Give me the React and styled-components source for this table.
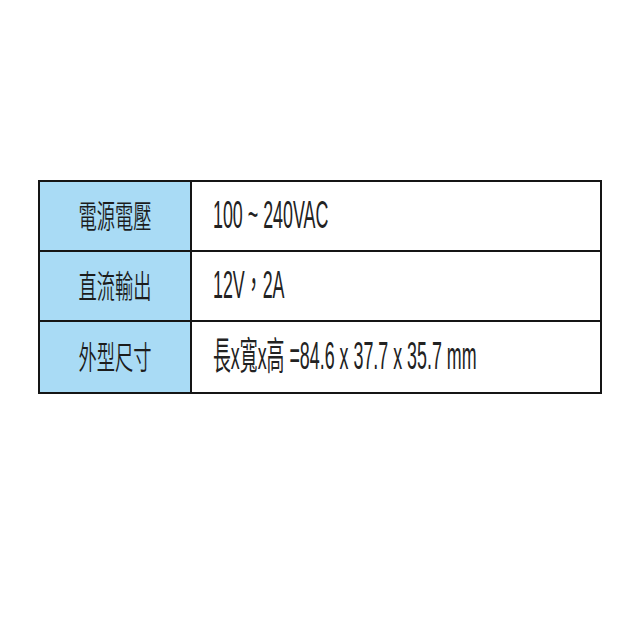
import React from 'react';
import styled, {createGlobalStyle} from 'styled-components';

const GlobalStyle = createGlobalStyle`
  html, body {
    margin: 0;
    padding: 0;
    background: #ffffff;
  }
`

const Page = styled.div`
  width: 640px;
  height: 640px;
  box-sizing: border-box;
  padding: 180px 0 0 38px;
  background: #ffffff;
  overflow: hidden;
`

const SpecTable = styled.table`
  width: 564px;
  border-collapse: collapse;
  border: 2px solid #151515;
  table-layout: fixed;
`

const Row = styled.tr`
  height: ${props => props.$h}px;
`

const LabelCell = styled.td`
  width: 150px;
  background: #a9dbf5;
  border: 2px solid #151515;
  text-align: center;
  padding: 0;
  vertical-align: middle;
  overflow: hidden;
`

const ValueCell = styled.td`
  background: #ffffff;
  border: 2px solid #151515;
  padding: 0 0 0 21px;
  vertical-align: middle;
  white-space: nowrap;
  overflow: hidden;
`

const LabelText = styled.span`
  display: inline-block;
  font-family: "Noto Sans CJK TC", "Noto Sans CJK SC", sans-serif;
  font-size: 32px;
  font-weight: 350;
  line-height: 1;
  color: #1c1c1c;
  transform: scaleX(0.57);
  transform-origin: center;
  margin-top: -2px;
`

const ValueText = styled.span`
  display: inline-block;
  font-family: "Liberation Sans", "Noto Sans CJK TC", sans-serif;
  font-size: 38px;
  line-height: 1;
  color: #222222;
  transform: scaleX(0.47);
  transform-origin: left center;
  margin-top: -2px;
`

const specs = [
  {label: '電源電壓', value: '100 ~ 240VAC', h: 70},
  {label: '直流輸出', value: '12V，2A', h: 70},
  {label: '外型尺寸', value: '長x寬x高 =84.6 x 37.7 x 35.7 mm', h: 72},
]

export default function App() {
  return (
    <Page>
      <GlobalStyle/>
      <SpecTable>
        <tbody>
          {specs.map((s) => (
            <Row key={s.label} $h={s.h}>
              <LabelCell><LabelText>{s.label}</LabelText></LabelCell>
              <ValueCell><ValueText>{s.value}</ValueText></ValueCell>
            </Row>
          ))}
        </tbody>
      </SpecTable>
    </Page>
  );
}
